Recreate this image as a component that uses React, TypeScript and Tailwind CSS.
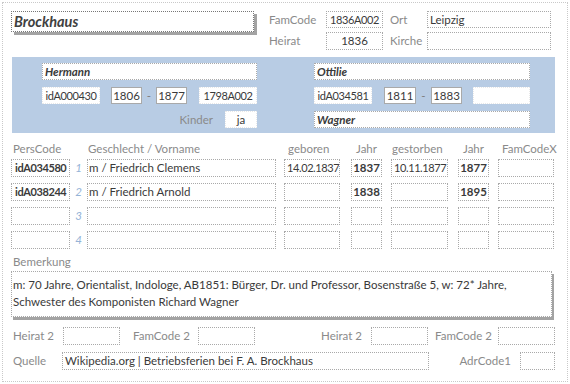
import React from "react"

const box = "bg-white border border-dotted border-[#a9a9a9] flex overflow-hidden whitespace-nowrap text-[#3a3a3a]"
const label = "text-[#8a8a8a] whitespace-nowrap"
const tight = "text-[11px] tracking-[-0.4px]"

const Field = ({ className = "", top = false, children }: { className?: string; top?: boolean; children?: React.ReactNode }) => (
  <div className={`${box} ${top ? "items-start pt-[1px]" : "items-center"} ${className}`}>{children}</div>
)

const cols = [
  { cell: "ml-[8px] w-[59px]", head: "pl-[2px]", title: "PersCode" },
  { cell: "w-[17px]", head: "", title: "" },
  { cell: "w-[189px]", head: "pl-[1px]", title: "Geschlecht / Vorname" },
  { cell: "ml-[8px] w-[56px]", head: "pl-[4px]", title: "geboren" },
  { cell: "ml-[11px] w-[31px]", head: "pl-[5px]", title: "Jahr" },
  { cell: "ml-[9px] w-[57px]", head: "pl-[1px]", title: "gestorben" },
  { cell: "ml-[10px] w-[31px]", head: "pl-[5px]", title: "Jahr" },
  { cell: "ml-[9px] w-[56px]", head: "pl-[4px]", title: "FamCodeX" },
]

const kids = [
  { code: "idA034580", name: "m / Friedrich Clemens", born: "14.02.1837", by: "1837", died: "10.11.1877", dy: "1877" },
  { code: "idA038244", name: "m / Friedrich Arnold", born: "", by: "1838", died: "", dy: "1895" },
  { code: "", name: "", born: "", by: "", died: "", dy: "" },
  { code: "", name: "", born: "", by: "", died: "", dy: "" },
]

export default function App() {
  return (
    <div className="w-[570px] h-[384px] bg-white font-['Lato',sans-serif] text-[11.5px] leading-[14px] pt-[2px] pl-[2px]">
      <div className="w-[566px] h-[380px] border border-dotted border-[#c9c9c9]">
        {/* Kopf */}
        <div className="flex pt-[7px] pl-[8px]">
          <div className="w-[243px] h-[21px] mt-[1px] border border-dotted border-[#777] bg-white shadow-[3px_3px_0_#a3a3a3] flex items-center pl-[2px] text-[14.5px] font-bold italic text-[#404040]">
            Brockhaus
          </div>
          <div className="ml-[15px] grid grid-cols-[57px_57px_44px_124px] grid-rows-[17px_18px] gap-y-[4px] mt-[1px]">
            <div className={`${label} flex items-center`}>FamCode</div>
            <Field className={`justify-center ${tight}`}>1836A002</Field>
            <div className={`${label} flex items-center pl-[7px]`}>Ort</div>
            <Field className="pl-[2px]">Leipzig</Field>
            <div className={`${label} flex items-center`}>Heirat</div>
            <Field className="justify-center">1836</Field>
            <div className={`${label} flex items-center pl-[7px]`}>Kirche</div>
            <Field />
          </div>
        </div>

        {/* Eltern */}
        <div className="ml-[9px] mt-[7px] w-[543px] h-[76px] bg-[#b8cce4] flex pl-[30px] pt-[6px]">
          <div className="w-[215px] flex flex-col gap-[7px]">
            <Field className="h-[17px] pl-[2px] font-bold italic">Hermann</Field>
            <div className="flex h-[17px]">
              <Field className={`w-[58px] justify-center border-[#e8e8e8] ${tight}`}>idA000430</Field>
              <Field className="ml-[11px] w-[31px] justify-center border-solid">1806</Field>
              <div className="w-[14px] flex items-center justify-center text-[#7f7f7f]">-</div>
              <Field className="w-[31px] justify-center border-solid">1877</Field>
              <Field className={`ml-[12px] w-[58px] justify-center border-[#e8e8e8] ${tight}`}>1798A002</Field>
            </div>
            <div className="flex h-[17px] justify-end">
              <div className={`${label} flex items-center`}>Kinder</div>
              <Field className="ml-[12px] w-[32px] justify-center border-[#e8e8e8]">ja</Field>
            </div>
          </div>
          <div className="ml-[57px] w-[216px] flex flex-col gap-[7px]">
            <Field className="h-[17px] pl-[2px] font-bold italic">Ottilie</Field>
            <div className="flex h-[17px]">
              <Field className={`w-[58px] justify-center border-[#e8e8e8] ${tight}`}>idA034581</Field>
              <Field className="ml-[12px] w-[32px] justify-center border-solid">1811</Field>
              <div className="w-[15px] flex items-center justify-center text-[#7f7f7f]">-</div>
              <Field className="w-[31px] justify-center border-solid">1883</Field>
              <Field className="ml-[11px] w-[57px] border-[#e8e8e8]" />
            </div>
            <Field className="h-[17px] pl-[2px] font-bold italic">Wagner</Field>
          </div>
        </div>

        {/* Kinder */}
        <div className="flex mt-[9px] h-[14px]">
          {cols.map((c, i) => (
            <div key={i} className={`${c.cell} ${c.head} ${label}`}>{c.title}</div>
          ))}
        </div>
        <div className="flex flex-col gap-[6px] mt-[3px]">
          {kids.map((k, i) => (
            <div key={i} className="flex h-[18px]">
              <Field className={`${cols[0].cell} pl-[3px] font-bold ${tight}`}>{k.code}</Field>
              <div className={`${cols[1].cell} flex items-center justify-center italic text-[#95b3d7]`}>{i + 1}</div>
              <Field className={`${cols[2].cell} pl-[1px]`}>{k.name}</Field>
              <Field className={`${cols[3].cell} pl-[2px] ${tight}`}>{k.born}</Field>
              <Field className={`${cols[4].cell} justify-center font-bold`}>{k.by}</Field>
              <Field className={`${cols[5].cell} pl-[2px] ${tight}`}>{k.died}</Field>
              <Field top className={`${cols[6].cell} justify-center font-bold`}>{k.dy}</Field>
              <Field className={cols[7].cell} />
            </div>
          ))}
        </div>

        {/* Bemerkung */}
        <div className={`${label} mt-[6px] ml-[10px]`}>Bemerkung</div>
        <div className="ml-[8px] mt-[2px] w-[541px] h-[46px] bg-white border border-dotted border-[#a9a9a9] shadow-[2px_3px_0_#a3a3a3] pl-[1px] pt-[4px] leading-[17px] text-[#3a3a3a]">
          m: 70 Jahre, Orientalist, Indologe, AB1851: Bürger, Dr. und Professor, Bosenstraße 5, w: 72* Jahre,
          <br />
          Schwester des Komponisten Richard Wagner
        </div>

        {/* Fuß */}
        <div className="flex h-[18px] mt-[10px] ml-[8px]">
          <div className={`${label} w-[52px] pl-[2px] flex items-center`}>Heirat 2</div>
          <Field className="w-[57px]" />
          <div className={`${label} w-[78px] pl-[13px] flex items-center`}>FamCode 2</div>
          <Field className="w-[57px]" />
          <div className={`${label} w-[116px] pr-[9px] flex items-center justify-end`}>Heirat 2</div>
          <Field className="w-[57px]" />
          <div className={`${label} w-[70px] pl-[7px] flex items-center`}>FamCode 2</div>
          <Field className="w-[57px]" />
        </div>
        <div className="flex h-[18px] mt-[7px] ml-[8px]">
          <div className={`${label} w-[51px] pl-[2px] flex items-center`}>Quelle</div>
          <Field className="w-[367px] pl-[2px]">Wikipedia.org | Betriebsferien bei F. A. Brockhaus</Field>
          <div className={`${label} w-[91px] pr-[9px] flex items-center justify-end`}>AdrCode1</div>
          <Field className="w-[35px]" />
        </div>
      </div>
    </div>
  )
}
